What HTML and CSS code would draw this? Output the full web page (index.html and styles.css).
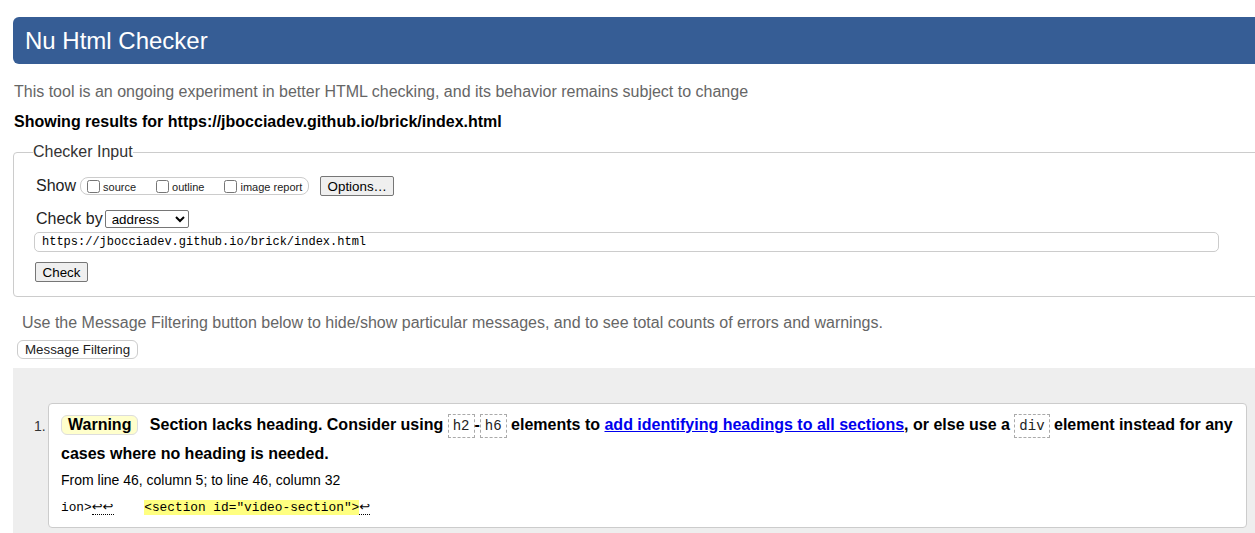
FILE: index.html
```html
<!DOCTYPE html>
<html lang="en">
<head>
<meta charset="utf-8">
<title>Nu Html Checker</title>
<link rel="stylesheet" href="styles.css">
</head>
<body>
<div class="page">
  <header class="banner"><h1>Nu Html Checker</h1></header>
  <p class="intro">This tool is an ongoing experiment in better HTML checking, and its behavior remains subject to change</p>
  <p class="results">Showing results for https://jbocciadev.github.io/brick/index.html</p>
  <form class="checker-form">
    <fieldset class="checker">
      <legend>Checker Input</legend>
      <div class="row show-row">
        <span class="row-label">Show</span>
        <span class="opts">
          <label class="opt"><input type="checkbox">source</label>
          <label class="opt"><input type="checkbox">outline</label>
          <label class="opt"><input type="checkbox">image report</label>
        </span>
        <button type="button" class="btn options">Options…</button>
      </div>
      <div class="row by-row">
        <span class="row-label">Check by</span>
        <select class="by-select"><option>address</option></select>
      </div>
      <input class="url" type="text" value="https://jbocciadev.github.io/brick/index.html">
      <div class="row submit-row"><button class="btn check" type="button">Check</button></div>
    </fieldset>
  </form>
  <p class="filter-hint">Use the Message Filtering button below to hide/show particular messages, and to see total counts of errors and warnings.</p>
  <button type="button" class="filter-btn">Message Filtering</button>
  <div class="results-area">
    <ol class="messages">
      <li class="msg">
        <span class="num">1.</span>
        <div class="card">
          <p class="msg-text"><strong class="badge">Warning</strong> Section lacks heading. Consider using <code>h2</code>-<code>h6</code> elements to <a href="#">add identifying headings to all sections</a>, or else use a <code>div</code> element instead for any cases where no heading is needed.</p>
          <p class="location">From line 46, column 5; to line 46, column 32</p>
          <p class="extract"><code>ion&gt;<span class="lf">↩↩</span>    <mark>&lt;section id="video-section"&gt;</mark><span class="lf">↩</span></code></p>
        </div>
      </li>
    </ol>
  </div>
</div>
</body>
</html>
```

FILE: styles.css
```css
html {
  overflow: hidden;
}
body {
  margin: 0;
  font-family: "Liberation Sans", Arial, sans-serif;
  color: #000;
  background: #fff;
}
.page {
  padding-top: 17px;
  margin-left: 13px;
  margin-right: -40px;
}
.banner {
  background: #365d95;
  border-radius: 6px;
  height: 47px;
}
.banner h1 {
  margin: 0;
  padding-left: 12px;
  font-size: 24px;
  line-height: 47px;
  font-weight: normal;
  color: #fff;
}
.intro {
  margin: 19px 0 0 1px;
  font-size: 16px;
  line-height: 18px;
  color: #666;
}
.results {
  margin: 12px 0 0 1px;
  font-size: 16px;
  line-height: 18px;
  font-weight: bold;
  color: #000;
}
.checker-form {
  margin: 12px 0 0 0;
}
.checker {
  margin: 0;
  border: 1px solid #ccc;
  border-radius: 4px;
  padding: 0 0 14px 20px;
  min-width: 0;
}
.checker legend {
  padding: 0;
  margin-left: -1px;
  font-size: 16px;
  line-height: 18px;
  color: #333;
}
.row {
  display: flex;
  align-items: center;
}
.show-row {
  margin-top: 15px;
  height: 20px;
}
.row-label {
  font-size: 16px;
  line-height: 18px;
  color: #222;
  padding-left: 2px;
}
.opts {
  display: flex;
  align-items: center;
  gap: 20px;
  height: 16px;
  margin-left: 4px;
  padding: 0 6px;
  border: 1px solid #ccc;
  border-radius: 8px;
}
.opt {
  display: flex;
  align-items: center;
  font-size: 11px;
  line-height: 14px;
  color: #222;
  padding-top: 2px;
}
.opt input {
  margin: 0 3px 0 0;
  width: 13px;
  height: 13px;
  position: relative;
  top: -1px;
}
.btn {
  font-family: "Liberation Sans", Arial, sans-serif;
  font-size: 13.333px;
  height: 20px;
  padding: 0 6px;
  background: #efefef;
  border: 1px solid #767676;
  border-radius: 2px;
  color: #000;
}
.options {
  margin-left: 11px;
  width: 74px;
}
.by-row {
  margin-top: 13px;
  height: 19px;
}
.by-select {
  margin-left: 2px;
  width: 84px;
  height: 18px;
  font-family: "Liberation Sans", Arial, sans-serif;
  font-size: 13.333px;
  border: 1px solid #767676;
  border-radius: 2px;
  background: #fff;
  color: #000;
  padding: 0 0 0 2px;
}
.url {
  display: block;
  box-sizing: border-box;
  margin: 4px 0 0 0;
  width: 1185px;
  height: 20px;
  padding: 0 7px;
  border: 1px solid #ccc;
  border-radius: 5px;
  font-family: "Liberation Mono", "DejaVu Sans Mono", monospace;
  font-size: 12px;
  color: #000;
  background: #fff;
}
.submit-row {
  margin-top: 10px;
}
.check {
  margin-left: 1px;
  width: 53px;
}
.filter-hint {
  margin: 17px 0 0 9px;
  font-size: 16px;
  line-height: 18px;
  color: #666;
}
.filter-btn {
  display: block;
  margin: 8px 0 0 4px;
  height: 19px;
  padding: 0 7px;
  font-family: "Liberation Sans", Arial, sans-serif;
  font-size: 13.333px;
  color: #222;
  background: #fff;
  border: 1px solid #ccc;
  border-radius: 6px;
}
.results-area {
  margin-top: 9px;
  background: #eee;
  padding: 35px 0 30px 0;
}
.messages {
  list-style: none;
  margin: 0;
  padding: 0 0 0 21px;
}
.msg {
  display: flex;
  align-items: flex-start;
}
.num {
  width: 14px;
  margin-top: 14px;
  font-size: 14px;
  line-height: 18px;
  color: #333;
}
.card {
  flex: 0 0 1199px;
  box-sizing: border-box;
  background: #fff;
  border: 1px solid #ccc;
  border-radius: 4px;
  padding: 7px 6px 10px 12px;
}
.msg-text {
  margin: 0;
  font-size: 16px;
  line-height: 28px;
  font-weight: bold;
}
.badge {
  display: inline-block;
  background: #ffffcc;
  border: 1px solid #ddd;
  border-radius: 6px;
  padding: 0 6px;
  line-height: 18px;
  margin-right: 7px;
}
.msg-text code {
  font-family: "Liberation Mono", "DejaVu Sans Mono", monospace;
  font-weight: normal;
  font-size: 14px;
  color: #222;
  border: 1px dashed #aaa;
  padding: 3px 4px;
}
.msg-text a {
  color: #0000ee;
  text-decoration: underline;
}
.location {
  margin: 3px 0 0 0;
  font-size: 14px;
  line-height: 18px;
}
.extract {
  margin: 8px 0 0 0;
  line-height: 18px;
}
.extract code {
  font-family: "Liberation Mono", "DejaVu Sans Mono", monospace;
  font-size: 12.8px;
  white-space: pre;
}
.lf {
  border-bottom: 1px dotted #000;
  font-family: "DejaVu Sans", sans-serif;
  font-size: 13px;
  line-height: 14px;
}
.extract mark {
  background: #ffff80;
  color: #000;
}
```
